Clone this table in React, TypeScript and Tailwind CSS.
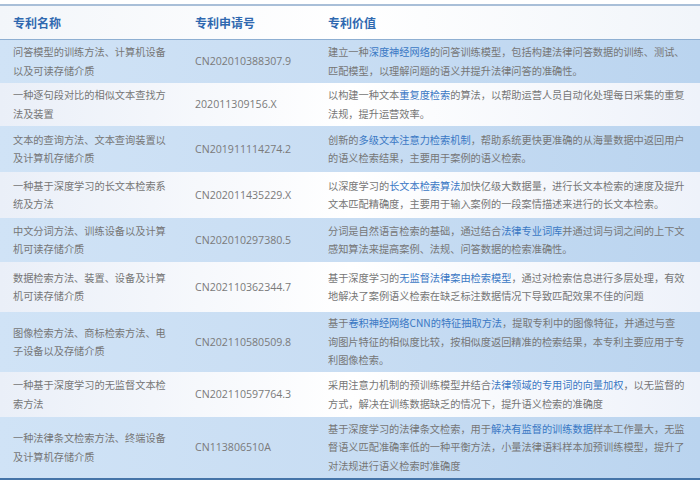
import React from 'react';

type Patent = {
  name: string[];
  no: string;
  value: string;
  h: string;
  blue: boolean;
};

// value text: \n = line break, [..] = highlighted term
const patents: Patent[] = [
  {
    name: ['问答模型的训练方法、计算机设备', '以及可读存储介质'],
    no: 'CN202010388307.9',
    value: '建立一种[深度神经网络]的问答训练模型，包括构建法律问答数据的训练、测试、\n匹配模型，以理解问题的语义并提升法律问答的准确性。',
    h: 'h-[43px]',
    blue: true,
  },
  {
    name: ['一种逐句段对比的相似文本查找方', '法及装置'],
    no: '202011309156.X',
    value: '以构建一种文本[重复度检索]的算法，以帮助运营人员自动化处理每日采集的重复\n法规，提升运营效率。',
    h: 'h-[43px]',
    blue: false,
  },
  {
    name: ['文本的查询方法、文本查询装置以', '及计算机存储介质'],
    no: 'CN201911114274.2',
    value: '创新的[多级文本注意力检索机制]，帮助系统更快更准确的从海量数据中返回用户\n的语义检索结果，主要用于案例的语义检索。',
    h: 'h-[46px]',
    blue: true,
  },
  {
    name: ['一种基于深度学习的长文本检索系', '统及方法'],
    no: 'CN202011435229.X',
    value: '以深度学习的[长文本检索算法]加快亿级大数据量，进行长文本检索的速度及提升\n文本匹配精确度，主要用于输入案例的一段案情描述来进行的长文本检索。',
    h: 'h-[46px]',
    blue: false,
  },
  {
    name: ['中文分词方法、训练设备以及计算', '机可读存储介质'],
    no: 'CN202010297380.5',
    value: '分词是自然语言检索的基础，通过结合[法律专业词库]并通过词与词之间的上下文\n感知算法来提高案例、法规、问答数据的检索准确性。',
    h: 'h-[44px]',
    blue: true,
  },
  {
    name: ['数据检索方法、装置、设备及计算', '机可读存储介质'],
    no: 'CN202110362344.7',
    value: '基于深度学习的[无监督法律案由检索模型]，通过对检索信息进行多层处理，有效\n地解决了案例语义检索在缺乏标注数据情况下导致匹配效果不佳的问题',
    h: 'h-[50px]',
    blue: false,
  },
  {
    name: ['图像检索方法、商标检索方法、电', '子设备以及存储介质'],
    no: 'CN202110580509.8',
    value: '基于[卷积神经网络CNN的特征抽取方法]，提取专利中的图像特征，并通过与查\n询图片特征的相似度比较，按相似度返回精准的检索结果，本专利主要应用于专\n利图像检索。',
    h: 'h-[60px]',
    blue: true,
  },
  {
    name: ['一种基于深度学习的无监督文本检', '索方法'],
    no: 'CN202110597764.3',
    value: '采用注意力机制的预训练模型并结合[法律领域的专用词的向量加权]，以无监督的\n方式，解决在训练数据缺乏的情况下，提升语义检索的准确度',
    h: 'h-[45px]',
    blue: false,
  },
  {
    name: ['一种法律条文检索方法、终端设备', '及计算机存储介质'],
    no: 'CN113806510A',
    value: '基于深度学习的法律条文检索，用于[解决有监督的训练数据]样本工作量大，无监\n督语义匹配准确率低的一种平衡方法，小量法律语料样本加预训练模型，提升了\n对法规进行语义检索时准确度',
    h: 'h-[61px]',
    blue: true,
  },
];

const renderValue = (text: string) =>
  text.split('\n').map((line, i) => (
    <div key={i} className="whitespace-nowrap">
      {line.split(/(\[[^\]]+\])/).map((seg, j) =>
        seg.startsWith('[') ? (
          <span key={j} className="text-[#3a78c4]">
            {seg.slice(1, -1)}
          </span>
        ) : (
          <span key={j}>{seg}</span>
        )
      )}
    </div>
  ));

const App = () => {
  return (
    <div
      className="w-[700px] h-[484px] bg-white overflow-hidden pt-[4px]"
      style={{ fontFamily: '"Noto Sans CJK SC", "Noto Sans", sans-serif' }}
    >
      <div className="border-t-2 border-b border-t-[#a9bfd8] border-b-[#8eafd2] bg-gradient-to-r from-[#f3f6fa] via-white to-[#f1f5fa] h-[36px] grid grid-cols-[195px_133px_1fr] items-center text-[12px] font-bold text-[#3069b0]">
        <div className="pl-[13px]">专利名称</div>
        <div>专利申请号</div>
        <div>专利价值</div>
      </div>

      <div className="border-b-2 border-[#4574a8]">
        {patents.map((p) => (
          <div
            key={p.no}
            className={`${p.h} grid grid-cols-[195px_133px_1fr] items-center text-[10.2px] leading-[18.5px] text-[#767676] ${
              p.blue
                ? 'bg-gradient-to-r from-[#d0e3f6] via-[#c8ddf3] to-[#bad4ef]'
                : 'bg-gradient-to-r from-[#eaeff8] via-white to-[#eef2fa]'
            }`}
          >
            <div className="pl-[13px]">
              {p.name.map((l, i) => (
                <div key={i} className="whitespace-nowrap">
                  {l}
                </div>
              ))}
            </div>
            <div
              className="text-[10.6px] text-[#7a7a7a]"
              style={{ fontFamily: '"Open Sans", "Noto Sans CJK SC", sans-serif' }}
            >
              {p.no}
            </div>
            <div>{renderValue(p.value)}</div>
          </div>
        ))}
      </div>
    </div>
  );
};

export default App;
